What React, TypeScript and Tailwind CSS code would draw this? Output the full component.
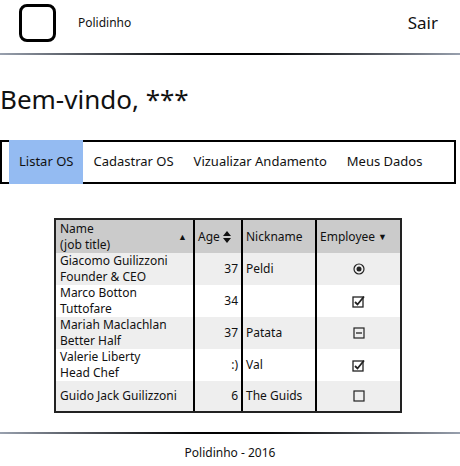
import React from "react";

type Row = {
  name: string;
  title?: string;
  age: string;
  nick: string;
  emp: "radio" | "check" | "minus" | "empty";
};

const rows: Row[] = [
  { name: "Giacomo Guilizzoni", title: "Founder & CEO", age: "37", nick: "Peldi", emp: "radio" },
  { name: "Marco Botton", title: "Tuttofare", age: "34", nick: "", emp: "check" },
  { name: "Mariah Maclachlan", title: "Better Half", age: "37", nick: "Patata", emp: "minus" },
  { name: "Valerie Liberty", title: "Head Chef", age: ":)", nick: "Val", emp: "check" },
  { name: "Guido Jack Guilizzoni", age: "6", nick: "The Guids", emp: "empty" },
];

function EmpIcon({ kind }: { kind: Row["emp"] }) {
  if (kind === "radio") {
    return (
      <svg width="12" height="12" viewBox="0 0 12 12">
        <circle cx="6" cy="6" r="5" fill="none" stroke="#222" strokeWidth="1.2" />
        <circle cx="6" cy="6" r="2.5" fill="#222" />
      </svg>
    );
  }
  if (kind === "check") {
    return (
      <svg width="13" height="13" viewBox="0 0 13 13">
        <rect x="1" y="2" width="10" height="10" fill="none" stroke="#222" strokeWidth="1.3" />
        <path d="M3 7 L5.5 9.5 L12 1.5" fill="none" stroke="#222" strokeWidth="1.8" />
      </svg>
    );
  }
  if (kind === "minus") {
    return (
      <svg width="12" height="12" viewBox="0 0 12 12">
        <rect x="1" y="1" width="10" height="10" fill="none" stroke="#222" strokeWidth="1.2" />
        <path d="M3 6 H9" stroke="#222" strokeWidth="1.3" />
      </svg>
    );
  }
  return (
    <svg width="12" height="12" viewBox="0 0 12 12">
      <rect x="1" y="1" width="10" height="10" fill="none" stroke="#222" strokeWidth="1.2" />
    </svg>
  );
}

function Rule() {
  return <div className="h-[2px] w-full bg-gradient-to-r from-gray-400 via-black to-gray-400" />;
}

export default function App() {
  const tabs = ["Listar OS", "Cadastrar OS", "Vizualizar Andamento", "Meus Dados"];

  return (
    <div className="w-[460px] h-[466px] bg-white text-[#111] font-['Noto_Sans',sans-serif] overflow-hidden">
      <header className="flex h-[53px] items-start pl-[19px] pr-[22px]">
        <div className="mt-[4px] h-[38px] w-[37px] rounded-[8px] border-[3px] border-black" />
        <span className="ml-[22px] mt-[14px] text-[12px]">Polidinho</span>
        <span className="ml-auto mt-[10px] text-[17px]">Sair</span>
      </header>
      <Rule />

      <h1 className="mt-[27px] h-[40px] text-[26px] leading-[34px]">Bem-vindo, ***</h1>

      <nav className="mt-[18px] flex h-[44px] w-[456px] items-stretch border-2 border-black">
        {tabs.map((t, i) => (
          <div
            key={t}
            className={
              i === 0
                ? "-my-[2px] ml-[7px] flex items-center bg-[#94bbf2] px-[10px] text-[13px]"
                : "flex items-center px-[10px] text-[13px]"
            }
          >
            {t}
          </div>
        ))}
      </nav>

      <div className="ml-[54px] mt-[34px] w-[348px] border-2 border-[#222] text-[12px] leading-[16px]">
        <div className="flex h-[33px] bg-[#cbcbcb]">
          <div className="flex w-[139px] items-center border-r-2 border-black pl-[4px] pr-[6px]">
            <div className="flex-1 leading-[16px]">
              Name
              <br />
              (job title)
            </div>
            <span className="text-[9px]">▲</span>
          </div>
          <div className="flex w-[48px] items-center border-r-2 border-black pl-[3px]">
            Age
            <svg width="10" height="14" viewBox="0 0 10 14" className="ml-[2px]">
              <path d="M1 6 L5 1 L9 6 Z M1 8 L5 13 L9 8 Z" fill="#111" />
            </svg>
          </div>
          <div className="flex w-[74px] items-center border-r-2 border-black pl-[3px]">Nickname</div>
          <div className="flex flex-1 items-center pl-[3px]">
            Employee
            <span className="ml-[3px] text-[9px]">▼</span>
          </div>
        </div>
        {rows.map((r, i) => (
          <div
            key={r.name}
            className={`flex ${i === rows.length - 1 ? "h-[30px]" : "h-[32px]"} ${i % 2 === 0 ? "bg-[#eeeeee]" : "bg-white"}`}
          >
            <div className="flex w-[139px] flex-col justify-center border-r-2 border-black pl-[4px]">
              <span>{r.name}</span>
              {r.title && <span>{r.title}</span>}
            </div>
            <div className="flex w-[48px] items-center justify-end border-r-2 border-black pr-[3px]">{r.age}</div>
            <div className="flex w-[74px] items-center border-r-2 border-black pl-[3px]">{r.nick}</div>
            <div className="flex flex-1 items-center justify-center">
              <EmpIcon kind={r.emp} />
            </div>
          </div>
        ))}
      </div>

      <div className="mt-[19px]">
        <Rule />
      </div>
      <footer className="mt-[10px] text-center text-[12px]">Polidinho - 2016</footer>
    </div>
  );
}
